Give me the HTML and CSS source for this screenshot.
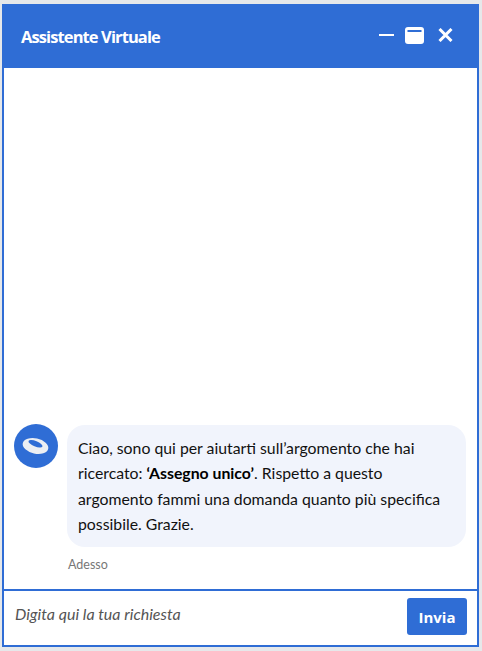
FILE: index.html
```html
<!DOCTYPE html>
<html lang="it">
<head>
    <meta charset="UTF-8">
    <meta name="viewport" content="width=device-width, initial-scale=1.0">
    <title>Assistente Virtuale</title>
    <link rel="stylesheet" href="styles.css">
</head>
<body>

    <div class="chat">
        <div class="chat-header">
            <span class="chat-title">Assistente Virtuale</span>
            <div class="chat-actions">
                <svg class="icon-min" width="15" height="2" viewBox="0 0 15 2"><rect width="15" height="2" fill="#fff"/></svg>
                <svg class="icon-max" width="19" height="17" viewBox="0 0 19 17"><rect width="19" height="17" rx="3" fill="#fff"/><rect x="2.5" y="3" width="14" height="2" fill="#2f6dd5"/></svg>
                <svg class="icon-close" width="15" height="14" viewBox="0 0 15 14"><path d="M1.5 1 L13.5 13 M13.5 1 L1.5 13" stroke="#fff" stroke-width="3" fill="none"/></svg>
            </div>
        </div>

        <div class="chat-body">
            <div class="message">
                <div class="avatar">
                    <svg class="avatar-logo" width="44" height="44" viewBox="0 0 44 44">
                        <ellipse cx="21.5" cy="22" rx="13" ry="7.6" transform="rotate(12 21.5 22)" fill="#eceff3"/>
                        <ellipse cx="21.5" cy="19.8" rx="7.5" ry="2.7" transform="rotate(22 21.5 19.8)" fill="#2f6dd5"/>
                    </svg>
                </div>
                <div class="bubble">Ciao, sono qui per aiutarti sull’argomento che hai ricercato: <strong>‘Assegno unico’</strong>. Rispetto a questo argomento fammi una domanda quanto più specifica possibile. Grazie.</div>
            </div>
            <div class="timestamp">Adesso</div>
        </div>

        <div class="chat-footer">
            <span class="chat-input">Digita qui la tua richiesta</span>
            <button class="send">Invia</button>
        </div>
    </div>

</body>
</html>
```

FILE: styles.css
```css
/* General Styling */
html, body {
    height: 100%;
}
body {
    margin: 0;
    padding: 4px 3px 4px 2px;
    box-sizing: border-box;
    background: #e6e8ea;
    font-family: 'Lato', sans-serif;
}
.chat {
    height: 643px;
    box-sizing: border-box;
    display: flex;
    flex-direction: column;
    background: #fff;
    border: 2px solid #2f6dd5;
    border-top: none;
}
.chat-header {
    height: 64px;
    flex: none;
    margin: 0 -2px;
    padding: 0 26px 0 19px;
    display: flex;
    align-items: center;
    justify-content: space-between;
    background: #2f6dd5;
}
.chat-title {
    font-family: 'Open Sans', sans-serif;
    font-size: 16.5px;
    font-weight: 700;
    letter-spacing: -0.9px;
    color: #fff;
}
.chat-actions {
    display: flex;
    align-items: center;
    gap: 11px;
    margin-bottom: 2px;
}
.icon-close {
    margin-left: 3px;
}
.chat-body {
    flex: 1;
    display: flex;
    flex-direction: column;
    justify-content: flex-end;
    padding: 0 11px 16px 10px;
}
.message {
    display: flex;
    align-items: flex-start;
    gap: 9px;
}
.avatar {
    width: 44px;
    height: 44px;
    flex: none;
    margin-top: -1px;
    border-radius: 50%;
    background: #2f6dd5;
}
.avatar-logo {
    filter: blur(0.5px);
}
.bubble {
    flex: 1;
    padding: 10px 18px 10px 11px;
    background: #f1f4fc;
    border-radius: 18px;
    font-size: 15.8px;
    line-height: 25.6px;
    color: #111;
}
.bubble strong {
    color: #000;
}
.timestamp {
    margin: 10px 0 0 54px;
    font-size: 12.5px;
    line-height: 16px;
    color: #777;
}
.chat-footer {
    height: 56px;
    flex: none;
    box-sizing: border-box;
    border-top: 2px solid #2f6dd5;
    padding: 7px 10px 0 11px;
    display: flex;
    align-items: flex-start;
    justify-content: space-between;
}
.chat-input {
    font-size: 16px;
    line-height: 32px;
    font-style: italic;
    color: #555;
}
.send {
    width: 60px;
    height: 37px;
    border: none;
    border-radius: 3px;
    background: #2f6dd5;
    color: #fff;
    font-family: 'Open Sans', sans-serif;
    font-size: 15px;
    font-weight: 700;
}
```
